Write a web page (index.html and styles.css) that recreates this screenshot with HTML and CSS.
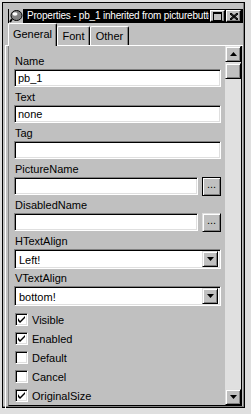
FILE: index.html
```html
<!DOCTYPE html>
<html lang="en">
<head>
    <meta charset="UTF-8">
    <meta name="viewport" content="width=device-width, initial-scale=1.0">
    <title>Properties - pb_1</title>
    <link rel="stylesheet" href="styles.css">
</head>
<body>
    <div class="ventana">
        <div class="barra-titulo">
            <svg class="icono-app" width="14" height="14" viewBox="0 0 14 14">
                <rect x="0" y="0" width="14" height="14" fill="#c0c0c0"/>
                <ellipse cx="7.5" cy="6.5" rx="5.5" ry="5" fill="#808080" stroke="#000" stroke-width="1"/>
                <ellipse cx="6" cy="5" rx="2.5" ry="1.8" fill="#fff"/>
                <path d="M3 10 L1 13" stroke="#000" stroke-width="2"/>
            </svg>
            <span class="titulo">Properties - pb_1 inherited from picturebutton</span>
            <div class="boton-titulo">
                <svg width="9" height="9" viewBox="0 0 9 9">
                    <rect x="0.5" y="0.5" width="8" height="8" fill="none" stroke="#000"/>
                    <rect x="0" y="0" width="9" height="2" fill="#000"/>
                </svg>
            </div>
            <div class="boton-titulo cerrar">
                <svg width="8" height="7" viewBox="0 0 8 7">
                    <path d="M0 0 L8 7 M1 0 L8 6 M0 1 L7 7 M8 0 L0 7 M7 0 L0 6 M8 1 L1 7" stroke="#000" stroke-width="1"/>
                </svg>
            </div>
        </div>

        <div class="pestanas">
            <div class="pestana activa">General</div>
            <div class="pestana">Font</div>
            <div class="pestana">Other</div>
        </div>

        <div class="pagina">
            <div class="desplazable">
                <div class="propiedades">
                    <div class="prop">
                        <div class="etiqueta">Name</div>
                        <div class="campo">pb_1</div>
                    </div>
                    <div class="prop">
                        <div class="etiqueta">Text</div>
                        <div class="campo">none</div>
                    </div>
                    <div class="prop">
                        <div class="etiqueta">Tag</div>
                        <div class="campo"></div>
                    </div>
                    <div class="prop">
                        <div class="etiqueta">PictureName</div>
                        <div class="fila">
                            <div class="campo"></div>
                            <div class="boton-puntos defecto">...</div>
                        </div>
                    </div>
                    <div class="prop">
                        <div class="etiqueta">DisabledName</div>
                        <div class="fila">
                            <div class="campo"></div>
                            <div class="boton-puntos">...</div>
                        </div>
                    </div>
                    <div class="prop prop-lista">
                        <div class="etiqueta">HTextAlign</div>
                        <div class="lista">
                            <span>Left!</span>
                            <div class="boton-lista">
                                <svg width="7" height="4" viewBox="0 0 7 4"><path d="M0 0 H7 L3.5 4 Z" fill="#000"/></svg>
                            </div>
                        </div>
                    </div>
                    <div class="prop prop-lista">
                        <div class="etiqueta">VTextAlign</div>
                        <div class="lista">
                            <span>bottom!</span>
                            <div class="boton-lista">
                                <svg width="7" height="4" viewBox="0 0 7 4"><path d="M0 0 H7 L3.5 4 Z" fill="#000"/></svg>
                            </div>
                        </div>
                    </div>

                    <div class="casillas">
                        <div class="casilla"><span class="caja marcada"><svg width="7" height="7" viewBox="0 0 7 7"><path d="M0 2 V5 L2 7 L7 2 V0 L2 5 Z" fill="#000"/></svg></span>Visible</div>
                        <div class="casilla"><span class="caja marcada"><svg width="7" height="7" viewBox="0 0 7 7"><path d="M0 2 V5 L2 7 L7 2 V0 L2 5 Z" fill="#000"/></svg></span>Enabled</div>
                        <div class="casilla"><span class="caja"></span>Default</div>
                        <div class="casilla"><span class="caja"></span>Cancel</div>
                        <div class="casilla"><span class="caja marcada"><svg width="7" height="7" viewBox="0 0 7 7"><path d="M0 2 V5 L2 7 L7 2 V0 L2 5 Z" fill="#000"/></svg></span>OriginalSize</div>
                    </div>
                </div>

                <!-- Barra de desplazamiento -->
                <div class="barra-vertical">
                    <div class="flecha">
                        <svg width="7" height="4" viewBox="0 0 7 4"><path d="M0 4 H7 L3.5 0 Z" fill="#000"/></svg>
                    </div>
                    <div class="pulgar"></div>
                    <div class="pista"></div>
                    <div class="flecha">
                        <svg width="7" height="4" viewBox="0 0 7 4"><path d="M0 0 H7 L3.5 4 Z" fill="#000"/></svg>
                    </div>
                </div>
            </div>
        </div>
    </div>
</body>
</html>
```

FILE: styles.css
```css
* {
    margin: 0;
    padding: 0;
    box-sizing: border-box;
}

:root {
    --cara: #c0c0c0;
    --sombra: #808080;
    --luz: #ffffff;
    --claro: #dfdfdf;
    --oscuro: #000000;
}

body {
    background: var(--claro);
    font-family: "Liberation Sans", Arial, sans-serif;
    font-size: 11px;
    color: #000;
    width: 251px;
    height: 414px;
    overflow: hidden;
}

.ventana {
    margin: 2px 0 0 2px;
    width: 243px;
    height: 406px;
    background: var(--cara);
    border: 1px solid var(--oscuro);
    box-shadow: inset -1px -1px 0 var(--sombra);
    padding: 6px 1px 0 5px;
    display: flex;
    flex-direction: column;
}

/* Barra de titulo */
.barra-titulo {
    height: 14px;
    background: #000;
    display: flex;
    align-items: center;
    padding: 0 2px 0 1px;
}

.icono-app {
    flex: none;
    margin-right: 4px;
}

.titulo {
    flex: 1;
    min-width: 0;
    color: #fff;
    font-size: 10px;
    letter-spacing: -0.2px;
    white-space: nowrap;
    overflow: hidden;
    line-height: 14px;
}

.boton-titulo {
    flex: none;
    width: 15px;
    height: 12px;
    background: var(--cara);
    border: 1px solid;
    border-color: var(--luz) var(--oscuro) var(--oscuro) var(--luz);
    box-shadow: inset -1px -1px 0 var(--sombra);
    display: flex;
    align-items: center;
    justify-content: center;
    margin-left: 1px;
}

.boton-titulo svg {
    display: block;
}

/* Pestanas */
.pestanas {
    height: 23px;
    display: flex;
    align-items: flex-end;
}

.pestana {
    height: 19px;
    line-height: 18px;
    text-align: center;
    border-top: 1px solid var(--luz);
    border-left: 1px solid var(--luz);
    border-right: 1px solid var(--oscuro);
    border-radius: 2px 2px 0 0;
    box-shadow: inset -1px 0 0 var(--sombra);
}

.pestana:nth-child(2) {
    width: 33px;
}

.pestana:nth-child(3) {
    width: 39px;
}

.pestana.activa {
    width: 49px;
    height: 23px;
    line-height: 20px;
    margin-bottom: -1px;
    position: relative;
    z-index: 1;
    background: var(--cara);
}

/* Pagina de la pestana */
.pagina {
    flex: 1;
    margin-left: -3px;
    border-top: 1px solid var(--luz);
    border-left: 1px solid var(--luz);
    padding: 0 1px 3px 2px;
    display: flex;
}

.desplazable {
    flex: 1;
    display: flex;
    border-left: 1px solid var(--sombra);
    border-right: 1px solid var(--oscuro);
    border-bottom: 1px solid var(--oscuro);
    overflow: hidden;
}

.propiedades {
    flex: 1;
    padding: 7px 4px 0 5px;
    overflow: hidden;
}

.prop {
    margin-bottom: 2px;
}

.prop-lista {
    margin-bottom: 1px;
}

.etiqueta {
    height: 16px;
    line-height: 16px;
    padding-left: 1px;
    white-space: nowrap;
}

.campo {
    width: 207px;
    height: 18px;
    background: #fff;
    border: 1px solid;
    border-color: var(--sombra) var(--luz) var(--luz) var(--sombra);
    box-shadow: inset 1px 1px 0 var(--oscuro), inset -1px -1px 0 var(--claro);
    padding-left: 3px;
    line-height: 16px;
    white-space: nowrap;
}

.fila {
    display: flex;
    align-items: flex-start;
    height: 18px;
    gap: 4px;
}

.fila .campo {
    width: 184px;
}

.boton-puntos {
    width: 19px;
    height: 19px;
    background: var(--cara);
    border: 1px solid;
    border-color: var(--claro) var(--oscuro) var(--oscuro) var(--claro);
    box-shadow: inset 1px 1px 0 var(--luz), inset -1px -1px 0 var(--sombra);
    text-align: center;
    line-height: 13px;
}

.boton-puntos.defecto {
    border-color: var(--oscuro);
}

/* Lista desplegable */
.lista {
    width: 207px;
    height: 20px;
    background: #fff;
    border: 1px solid;
    border-color: var(--sombra) var(--luz) var(--luz) var(--sombra);
    box-shadow: inset 1px 1px 0 var(--oscuro), inset -1px -1px 0 var(--claro);
    padding: 1px 2px 1px 4px;
    display: flex;
    align-items: center;
}

.lista span {
    flex: 1;
    line-height: 16px;
    padding-top: 1px;
}

.boton-lista {
    width: 16px;
    height: 16px;
    background: var(--cara);
    border: 1px solid;
    border-color: var(--claro) var(--oscuro) var(--oscuro) var(--claro);
    box-shadow: inset 1px 1px 0 var(--luz), inset -1px -1px 0 var(--sombra);
    display: flex;
    align-items: center;
    justify-content: center;
}

.boton-lista svg,
.flecha svg {
    display: block;
}

/* Casillas */
.casillas {
    padding-top: 3px;
}

.casilla {
    height: 19px;
    display: flex;
    align-items: center;
    padding-left: 1px;
    gap: 4px;
}

.caja {
    width: 13px;
    height: 13px;
    background: #fff;
    border: 1px solid;
    border-color: var(--sombra) var(--luz) var(--luz) var(--sombra);
    box-shadow: inset 1px 1px 0 var(--oscuro), inset -1px -1px 0 var(--claro);
    display: flex;
    align-items: center;
    justify-content: center;
}

/* Barra de desplazamiento */
.barra-vertical {
    width: 16px;
    flex: none;
    display: flex;
    flex-direction: column;
    background: #e0e0e0;
}

.flecha,
.pulgar {
    width: 16px;
    height: 16px;
    flex: none;
    background: var(--cara);
    border: 1px solid;
    border-color: var(--claro) var(--oscuro) var(--oscuro) var(--claro);
    box-shadow: inset 1px 1px 0 var(--luz), inset -1px -1px 0 var(--sombra);
    display: flex;
    align-items: center;
    justify-content: center;
}

.pulgar {
    margin-top: 1px;
}

.pista {
    flex: 1;
}
```
